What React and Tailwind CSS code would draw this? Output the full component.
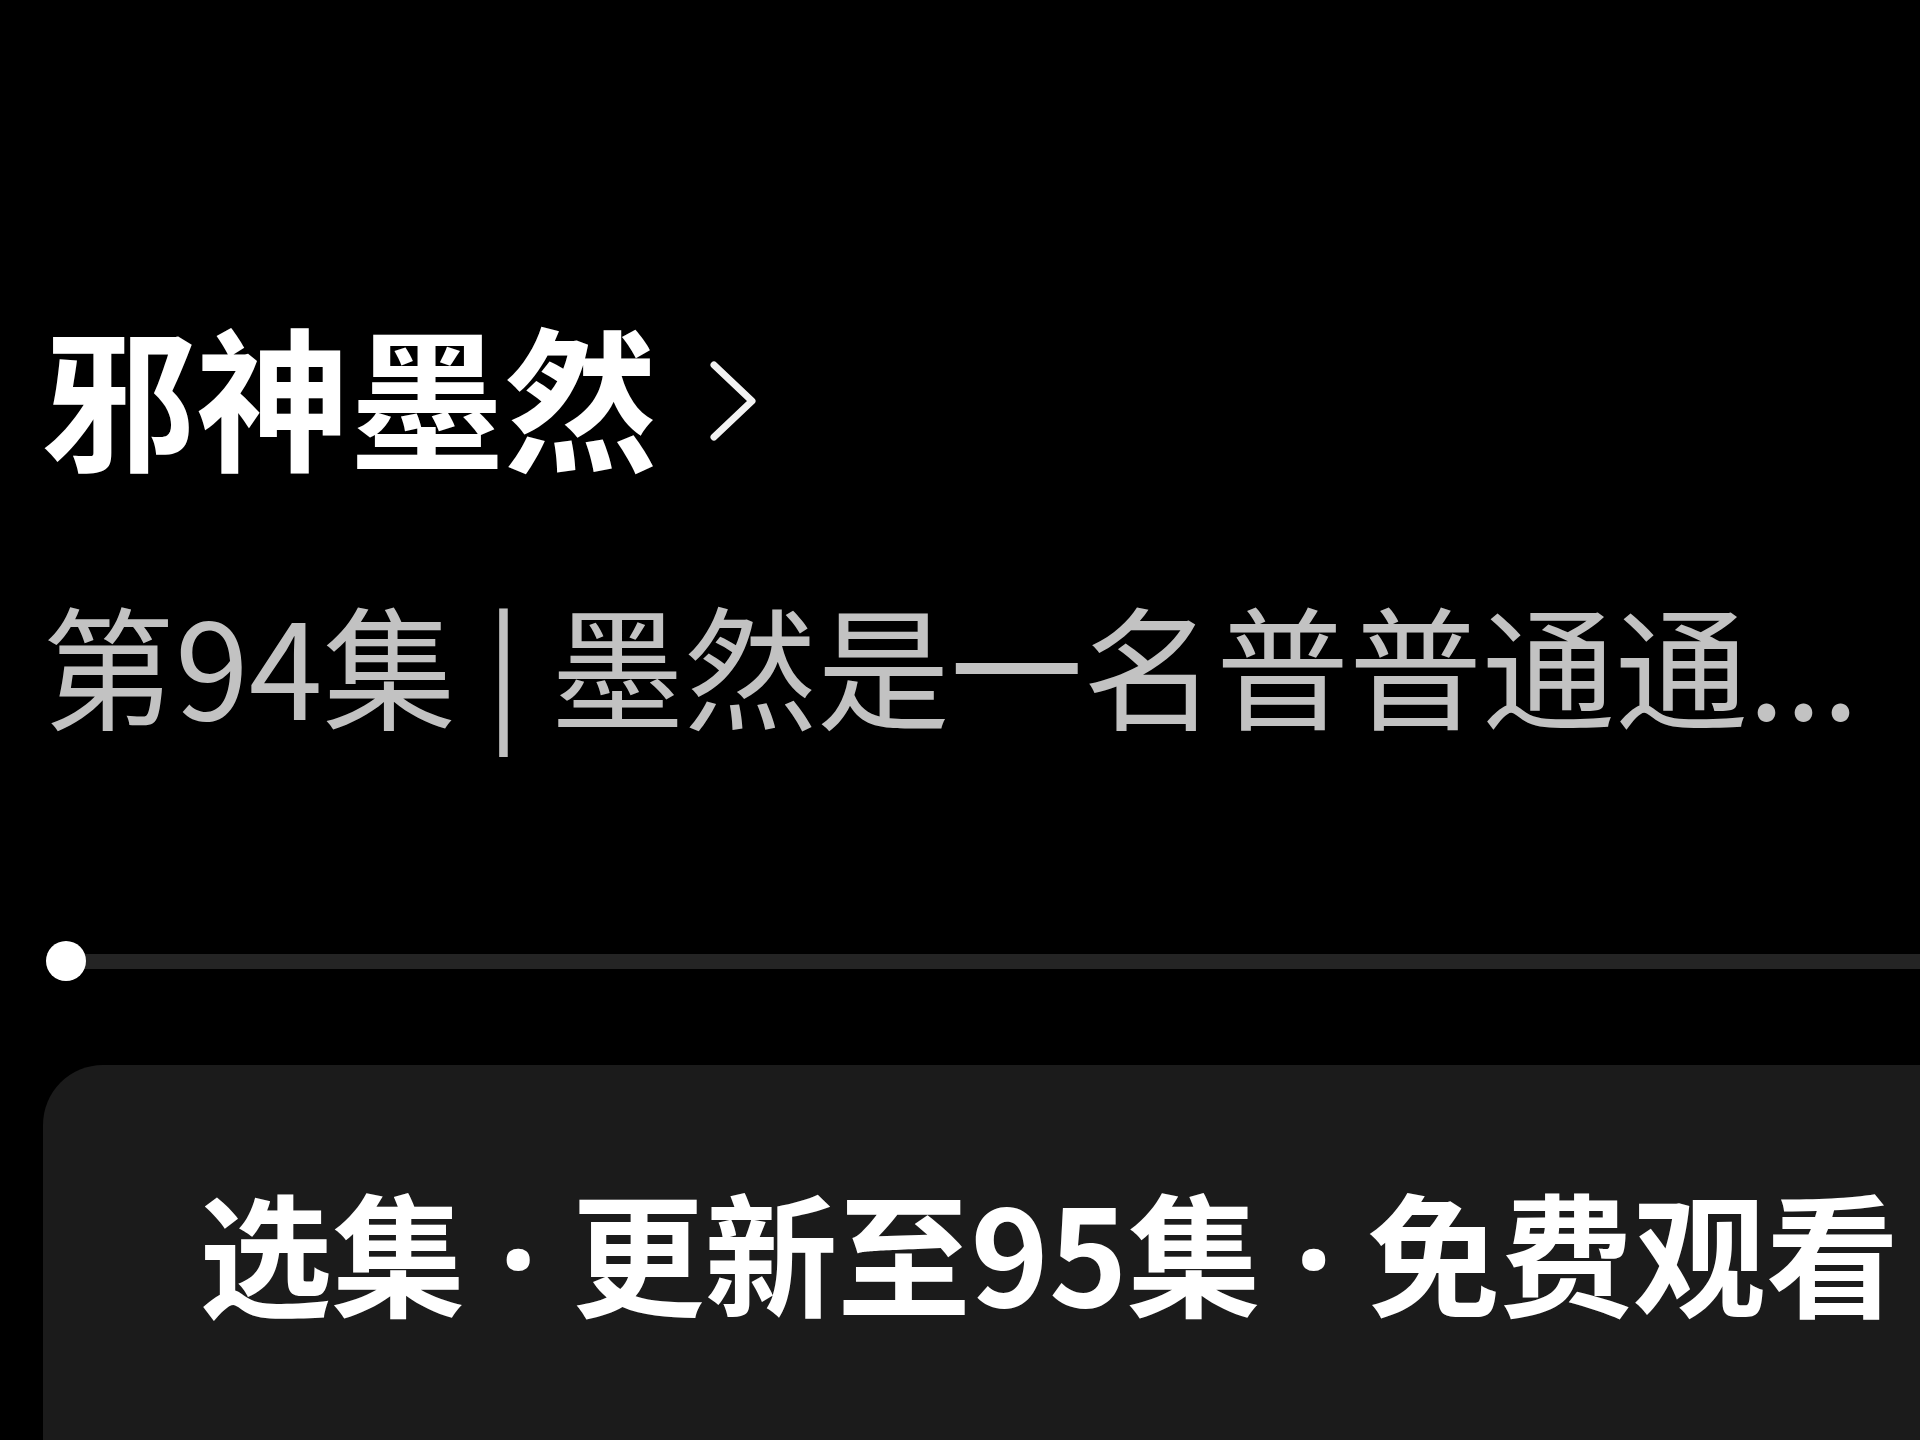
export default function App() {
  const font = { fontFamily: '"Noto Sans CJK SC", "Noto Sans", sans-serif' };
  const latin = { fontFamily: '"Noto Sans", "Noto Sans CJK SC", sans-serif' };
  return (
    <div className="w-[1920px] h-[1440px] bg-black overflow-hidden flex flex-col" style={font}>
      <div className="pl-[42px] pt-[316px]">
        <div className="flex items-center text-white text-[154px] leading-none font-bold">
          <span>邪神墨然</span>
          <svg className="ml-[48px] mt-[16px]" width="56" height="84" viewBox="0 0 56 84">
            <polyline points="8,6 46,42 8,78" fill="none" stroke="#f2f2f2" strokeWidth="7" strokeLinecap="round" strokeLinejoin="round" />
          </svg>
        </div>
        <div className="mt-[126px] text-[133px] leading-none text-[#c2c2c2] whitespace-nowrap">
          第94集 | 墨然是一名普普通通...
        </div>
      </div>
      <div className="mt-[212px] pl-[46px] flex items-center">
        <div className="w-[40px] h-[40px] rounded-full bg-white shrink-0 relative z-10"></div>
        <div className="flex-1 h-[15px] bg-[#242424] -ml-[4px]"></div>
      </div>
      <div className="mt-[84px] ml-[43px] flex-1 bg-[#1b1b1b] rounded-tl-[60px] pl-[156px] pt-[118px]">
        <div className="text-white text-[133px] leading-none font-bold whitespace-nowrap">
          选集<span style={latin}> · </span>更新至95集<span style={latin}> · </span>免费观看
        </div>
      </div>
    </div>
  );
}
